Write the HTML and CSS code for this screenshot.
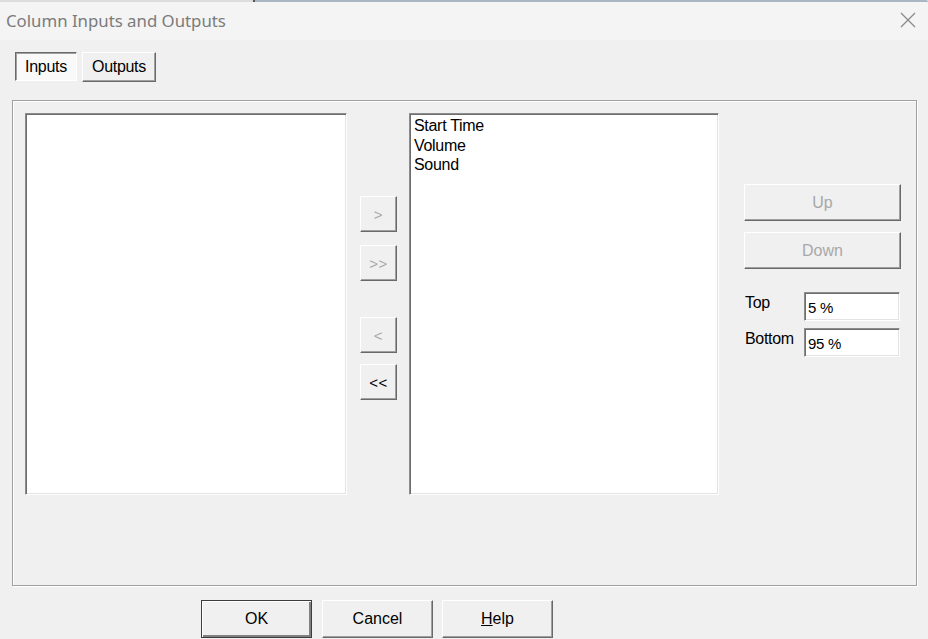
FILE: index.html
```html
<!DOCTYPE html>
<html>
<head>
  <title>Column Inputs and Outputs</title>
  <link rel="stylesheet" href="styles.css">
</head>
<body>
  <div class="window">
    <div class="topline"><span class="topline-left"></span><span class="topline-right"></span></div>

    <div class="titlebar">
      <span class="title">Column Inputs and Outputs</span>
      <svg class="close" width="16" height="16" viewBox="0 0 16 16">
        <path d="M1 1 L15 15 M15 1 L1 15" stroke="#8a8a8a" stroke-width="1.3" fill="none"/>
      </svg>
    </div>

    <div class="tabs">
      <button class="tab tab-active">Inputs</button>
      <button class="tab tab-outputs">Outputs</button>
    </div>

    <div class="panel">
      <div class="listbox list-left"></div>

      <div class="arrows">
        <button class="btn arrow arrow-1" disabled>&gt;</button>
        <button class="btn arrow arrow-2" disabled>&gt;&gt;</button>
        <button class="btn arrow arrow-3" disabled>&lt;</button>
        <button class="btn arrow arrow-4">&lt;&lt;</button>
      </div>

      <div class="listbox list-right">
        <div class="item">Start Time</div>
        <div class="item">Volume</div>
        <div class="item">Sound</div>
      </div>

      <div class="side">
        <button class="btn side-btn btn-up" disabled>Up</button>
        <button class="btn side-btn btn-down" disabled>Down</button>
        <div class="field field-top">
          <label for="top">Top</label>
          <input type="text" id="top" class="field-input" value="5 %">
        </div>
        <div class="field field-bottom">
          <label for="bottom">Bottom</label>
          <input type="text" id="bottom" class="field-input" value="95 %">
        </div>
      </div>
    </div>

    <div class="footer">
      <button class="btn foot-btn btn-default">OK</button>
      <button class="btn foot-btn">Cancel</button>
      <button class="btn foot-btn btn-help"><u>H</u>elp</button>
    </div>
  </div>
</body>
</html>
```

FILE: styles.css
```css
html, body {
  margin: 0;
  padding: 0;
}

body {
  width: 928px;
  height: 639px;
  overflow: hidden;
  background-color: #f0f0f0;
  font-family: "Liberation Sans", Arial, sans-serif;
  font-size: 16px;
  color: #000;
}

.window {
  width: 928px;
  height: 639px;
}

/* thin strip of the window behind */
.topline {
  display: flex;
  height: 2px;
}

.topline-left {
  width: 253px;
  background-color: #dcdcdc;
  border-right: 2px solid #555;
}

.topline-right {
  flex: 1;
  background-color: #a9b6c4;
  border-top-right-radius: 6px;
}

.titlebar {
  display: flex;
  align-items: center;
  justify-content: space-between;
  height: 38px;
  padding: 0 12px 0 6px;
  background-color: #f4f4f4;
}

.title {
  font-family: "Noto Sans", "Open Sans", sans-serif;
  font-size: 16.8px;
  color: #7b7b7b;
  margin-top: -2px;
}

.close {
  margin-top: -2px;
}

/* Tabs */
.tabs {
  display: flex;
  gap: 5px;
  padding: 12px 0 0 15px;
}

.tab {
  width: 74px;
  height: 30px;
  padding: 0;
  font-family: "Liberation Sans", Arial, sans-serif;
  font-size: 16px;
  letter-spacing: -0.3px;
  background-color: #f0f0f0;
  border: 1px solid;
  border-color: #fff #696969 #696969 #fff;
  box-shadow: inset -1px -1px 0 #a0a0a0;
}

.tab-active {
  width: 62px;
  height: 29px;
  background-color: #f9f9f9;
  border-color: #696969 #fff #fff #696969;
  box-shadow: inset 1px 1px 0 #a0a0a0;
}

/* Main panel */
.panel {
  display: flex;
  align-items: flex-start;
  box-sizing: border-box;
  width: 905px;
  height: 486px;
  margin: 18px 0 0 12px;
  padding: 12px;
  border: 1px solid #a0a0a0;
  box-shadow: inset 1px 1px 0 #fff, 1px 1px 0 #fff;
}

.listbox {
  box-sizing: border-box;
  height: 382px;
  background-color: #fff;
  border: 1px solid;
  border-color: #8c8c8c #fff #fff #8c8c8c;
  box-shadow: inset 1px 1px 0 #6e6e6e, inset -1px -1px 0 #e3e3e3;
}

.list-left {
  width: 322px;
}

.list-right {
  width: 310px;
  padding: 2px 0 0 4px;
}

.item {
  height: 19.5px;
  line-height: 19px;
  letter-spacing: -0.3px;
}

/* Buttons */
.btn {
  box-sizing: border-box;
  font-family: "Liberation Sans", Arial, sans-serif;
  font-size: 16px;
  color: #000;
  background-color: #f0f0f0;
  border: 1px solid;
  border-color: #fff #696969 #696969 #fff;
  box-shadow: inset -1px -1px 0 #a0a0a0;
  padding: 0;
}

.btn:disabled {
  color: #a8a8a8;
}

.arrows {
  display: flex;
  flex-direction: column;
  width: 37px;
  margin: 0 12px 0 13px;
}

.arrow {
  width: 37px;
  height: 36px;
  font-size: 15px;
  letter-spacing: 0.5px;
}

.arrow-1 {
  margin-top: 83px;
}

.arrow-2 {
  margin-top: 13px;
}

.arrow-3 {
  margin-top: 36px;
}

.arrow-4 {
  margin-top: 11px;
}

.side {
  display: flex;
  flex-direction: column;
  width: 157px;
  margin-left: 25px;
}

.side-btn {
  width: 157px;
  height: 37px;
}

.btn-up {
  margin-top: 71px;
}

.btn-down {
  margin-top: 11px;
}

.field {
  display: flex;
  align-items: center;
}

.field-top {
  margin-top: 23px;
}

.field-bottom {
  margin-top: 7px;
}

.field label {
  width: 59px;
  padding-left: 1px;
  margin-top: -8px;
  letter-spacing: -0.3px;
}

.field-input {
  box-sizing: border-box;
  width: 96px;
  height: 29px;
  padding: 2px 0 0 3px;
  font-family: "Liberation Sans", Arial, sans-serif;
  font-size: 15px;
  letter-spacing: -0.3px;
  background-color: #fff;
  border: 1px solid;
  border-color: #8c8c8c #fff #fff #8c8c8c;
  box-shadow: inset 1px 1px 0 #6e6e6e, inset -1px -1px 0 #e3e3e3;
  outline: none;
}

/* Bottom buttons */
.footer {
  display: flex;
  gap: 10px;
  padding: 14px 0 0 201px;
}

.foot-btn {
  width: 111px;
  height: 38px;
}

.btn-default {
  border-color: #3c3c3c;
  box-shadow: inset 1px 1px 0 #fff, inset -2px -2px 0 #808080;
}

.btn-help {
  margin-left: -1px;
}
```
